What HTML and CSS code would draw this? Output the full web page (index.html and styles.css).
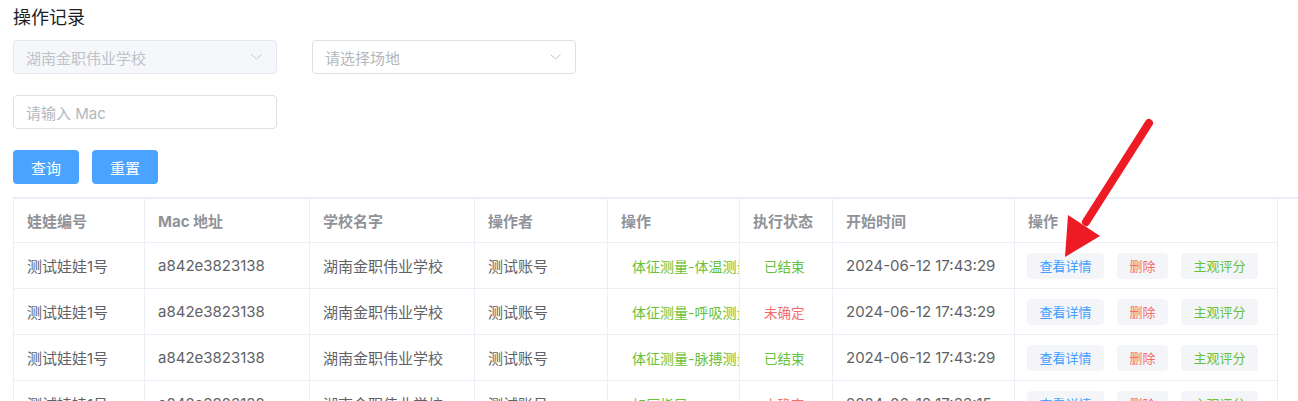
FILE: index.html
```html
<!DOCTYPE html>
<html lang="zh-CN">
<head>
<meta charset="utf-8">
<title>操作记录</title>
<link rel="stylesheet" href="styles.css">
</head>
<body>
<div class="page">
  <h1 class="title">操作记录</h1>

  <div class="filters">
    <div class="form-row">
      <div class="select is-disabled">
        <span class="select-value">湖南金职伟业学校</span>
        <svg class="chevron" width="11" height="6" viewBox="0 0 11 6"><polyline points="0.5,0.5 5.5,5 10.5,0.5"/></svg>
      </div>
      <div class="select">
        <span class="placeholder">请选择场地</span>
        <svg class="chevron" width="11" height="6" viewBox="0 0 11 6"><polyline points="0.5,0.5 5.5,5 10.5,0.5"/></svg>
      </div>
    </div>
    <div class="form-row">
      <div class="input"><span class="placeholder">请输入 Mac</span></div>
    </div>
    <div class="btn-row">
      <button class="btn btn-primary">查询</button>
      <button class="btn btn-primary">重置</button>
    </div>
  </div>

  <div class="table">
    <div class="tr thead">
      <div class="td">娃娃编号</div>
      <div class="td">Mac 地址</div>
      <div class="td">学校名字</div>
      <div class="td">操作者</div>
      <div class="td">操作</div>
      <div class="td">执行状态</div>
      <div class="td">开始时间</div>
      <div class="td">操作</div>
    </div>
    <div class="tr">
      <div class="td">测试娃娃1号</div>
      <div class="td">a842e3823138</div>
      <div class="td">湖南金职伟业学校</div>
      <div class="td">测试账号</div>
      <div class="td op">体征测量-体温测量</div>
      <div class="td status ok">已结束</div>
      <div class="td">2024-06-12 17:43:29</div>
      <div class="td actions"><span class="abtn blue">查看详情</span><span class="abtn red">删除</span><span class="abtn green">主观评分</span></div>
    </div>
    <div class="tr">
      <div class="td">测试娃娃1号</div>
      <div class="td">a842e3823138</div>
      <div class="td">湖南金职伟业学校</div>
      <div class="td">测试账号</div>
      <div class="td op">体征测量-呼吸测量</div>
      <div class="td status bad">未确定</div>
      <div class="td">2024-06-12 17:43:29</div>
      <div class="td actions"><span class="abtn blue">查看详情</span><span class="abtn red">删除</span><span class="abtn green">主观评分</span></div>
    </div>
    <div class="tr">
      <div class="td">测试娃娃1号</div>
      <div class="td">a842e3823138</div>
      <div class="td">湖南金职伟业学校</div>
      <div class="td">测试账号</div>
      <div class="td op">体征测量-脉搏测量</div>
      <div class="td status ok">已结束</div>
      <div class="td">2024-06-12 17:43:29</div>
      <div class="td actions"><span class="abtn blue">查看详情</span><span class="abtn red">删除</span><span class="abtn green">主观评分</span></div>
    </div>
    <div class="tr">
      <div class="td">测试娃娃1号</div>
      <div class="td">a842e3823138</div>
      <div class="td">湖南金职伟业学校</div>
      <div class="td">测试账号</div>
      <div class="td op">如厕指导</div>
      <div class="td status bad">未确定</div>
      <div class="td">2024-06-12 17:33:15</div>
      <div class="td actions"><span class="abtn blue">查看详情</span><span class="abtn red">删除</span><span class="abtn green">主观评分</span></div>
    </div>
  </div>

  <svg class="annotation" width="1298" height="401" viewBox="0 0 1298 401">
    <line x1="1149" y1="123" x2="1086" y2="222" stroke="#ed1c24" stroke-width="8" stroke-linecap="round"/>
    <polygon points="1065,257 1068,215 1100,236" fill="#ed1c24"/>
  </svg>
</div>
</body>
</html>
```

FILE: styles.css
```css
* {
  box-sizing: border-box;
}

body {
  margin: 0;
  background: #ffffff;
  font-family: "Inter", "Noto Sans CJK SC", sans-serif;
  color: #606266;
}

.page {
  position: relative;
  padding-left: 13px;
  height: 401px;
  overflow: hidden;
}

.title {
  margin: 6px 0 0;
  font-size: 18px;
  line-height: 24px;
  font-weight: 400;
  color: #1d1d1f;
}

.form-row {
  display: flex;
  gap: 35px;
  margin-top: 10px;
}

.form-row + .form-row {
  margin-top: 21px;
}

.select,
.input {
  width: 264px;
  height: 34px;
  border: 1px solid #dcdfe6;
  border-radius: 4px;
  display: flex;
  align-items: center;
  padding: 0 14px 0 12px;
  font-size: 15px;
  background: #ffffff;
}

.select.is-disabled {
  background: #f5f7fa;
  border-color: #e4e7ed;
}

.select-value,
.placeholder {
  color: #b4b7bd;
}

.select.is-disabled .select-value {
  color: #bfc2c8;
}

.chevron {
  margin-left: auto;
  fill: none;
  stroke: #c0c4cc;
  stroke-width: 1;
}

.btn-row {
  display: flex;
  gap: 13px;
  margin-top: 21px;
}

.btn {
  height: 34px;
  width: 66px;
  border: none;
  border-radius: 4px;
  font-family: inherit;
  font-size: 15px;
  padding: 0;
  cursor: pointer;
}

.btn-primary {
  background: #49a3ff;
  color: #ffffff;
}

.table {
  margin-top: 13px;
  border-top: 2px solid #ebeef5;
}

.tr {
  display: grid;
  grid-template-columns: 131px 165px 165px 133px 132px 93px 182px 263px;
  width: 1265px;
  border-left: 1px solid #ebeef5;
  height: 46px;
}

.tr.thead {
  height: 44px;
}

.td {
  border-right: 1px solid #ebeef5;
  border-bottom: 1px solid #ebeef5;
  padding-left: 13px;
  display: flex;
  align-items: center;
  font-size: 15px;
  white-space: nowrap;
  overflow: hidden;
}

.thead .td {
  color: #909399;
  font-weight: 700;
}

.td.op {
  padding-left: 24px;
  font-size: 14px;
  color: #67c23a;
}

.td.status {
  padding-left: 24px;
  font-size: 13.5px;
}

.status.ok {
  color: #67c23a;
}

.status.bad {
  color: #f56c6c;
}

.td.actions {
  padding-left: 12px;
  gap: 13px;
}

.abtn {
  height: 26px;
  padding: 0 12.5px;
  border-radius: 4px;
  background: #f4f5f8;
  font-size: 13px;
  display: flex;
  align-items: center;
}

.abtn.blue {
  color: #409eff;
}

.abtn.red {
  color: #f56c6c;
}

.abtn.green {
  color: #67c23a;
}

.annotation {
  position: absolute;
  left: 0;
  top: 0;
  pointer-events: none;
}
```
